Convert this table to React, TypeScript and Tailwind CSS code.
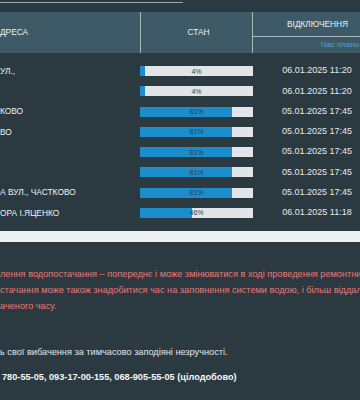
import React from "react";

const rows: { addr: string; pct: number; date: string }[] = [
  { addr: "УЛ.,", pct: 4, date: "06.01.2025 11:20" },
  { addr: "", pct: 4, date: "06.01.2025 11:20" },
  { addr: "КОВО", pct: 81, date: "05.01.2025 17:45" },
  { addr: "ВО", pct: 81, date: "05.01.2025 17:45" },
  { addr: "", pct: 81, date: "05.01.2025 17:45" },
  { addr: "", pct: 81, date: "05.01.2025 17:45" },
  { addr: "А ВУЛ., ЧАСТКОВО", pct: 81, date: "05.01.2025 17:45" },
  { addr: "ОРА І.ЯЦЕНКО", pct: 46, date: "06.01.2025 11:18" },
];

function Bar({ pct }: { pct: number }) {
  return (
    <div className="relative h-[10px] w-[113px] bg-[#e2e5e8]">
      <div className="h-full bg-[#1b8dcc]" style={{ width: `${pct}%` }} />
      <div className="absolute inset-0 flex items-center justify-center text-[7px] leading-none text-[#2a3f50]">
        {pct}%
      </div>
    </div>
  );
}

export default function App() {
  return (
    <div
      className="w-[360px] h-[400px] overflow-hidden bg-[#2b3a41] text-white"
      style={{ fontFamily: '"Liberation Sans", Arial, sans-serif' }}
    >
      <div className="h-[12px] pt-[2px]">
        <div className="h-px w-[183px] bg-[#9aa5ab]" />
      </div>

      <div className="flex h-[41px] w-[400px] bg-[#3d5a66] text-[8.3px] text-[#eef2f4]">
        <div className="flex w-[140px] items-center">ДРЕСА</div>
        <div className="flex w-[112px] items-center justify-center border-l border-[#a9b8bf] pl-[4px]">
          СТАН
        </div>
        <div className="flex w-[130px] flex-col border-l border-[#a9b8bf]">
          <div className="flex h-[24px] items-center justify-center">ВІДКЛЮЧЕННЯ</div>
          <div className="flex flex-1 items-center whitespace-nowrap border-t border-[#a9b8bf] pl-[68px] text-[8px] text-[#4da3d9]">
            Час плано
          </div>
        </div>
      </div>

      <div className="w-[400px] pt-[8px] pb-[8px]">
        {rows.map((r, i) => (
          <div key={i} className="flex h-[20.25px] items-center">
            <div className="w-[140px] whitespace-nowrap text-[8.4px] text-[#eef2f4]">{r.addr}</div>
            <Bar pct={r.pct} />
            <div className="w-[128px] whitespace-nowrap text-center text-[9px] text-[#e6eaec]">
              {r.date}
            </div>
          </div>
        ))}
      </div>

      <div className="h-[12px] border-b border-[#24323a] bg-[#edf0f2]" />

      <div className="mt-[23px] whitespace-nowrap text-[9.2px] leading-[16px] text-[#ea7878]">
        <div>лення водопостачання – попереднє і може змінюватися в ході проведення ремонтних</div>
        <div>стачання може також знадобитися час на заповнення системи водою, і більш віддал</div>
        <div>аченого часу.</div>
      </div>

      <div className="mt-[30px] whitespace-nowrap text-[9.2px] leading-[16px] text-[#e2e6e8]">
        ь свої вибачення за тимчасово заподіяні незручності.
      </div>
      <div className="mt-[9px] whitespace-nowrap pl-[2px] text-[9.2px] font-bold leading-[16px] text-[#f4f6f7]">
        780-55-05, 093-17-00-155, 068-905-55-05 (цілодобово)
      </div>
    </div>
  );
}
